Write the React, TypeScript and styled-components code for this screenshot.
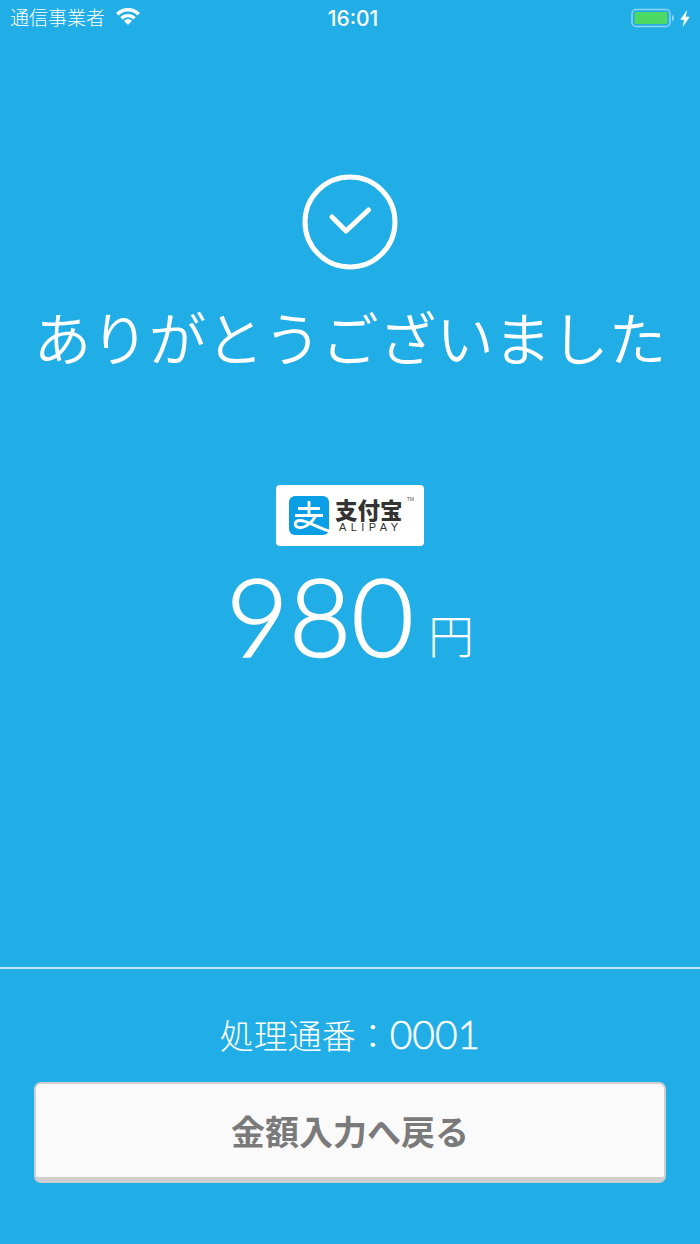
import { createGlobalStyle } from "styled-components";
import styled from "styled-components";

const JP = `"Noto Sans CJK JP", "Noto Sans", sans-serif`;
const LATIN = `Inter, "Noto Sans CJK JP", sans-serif`;
const DIGITS = `Lato, "Noto Sans CJK JP", sans-serif`;

const GlobalStyle = createGlobalStyle`
	html, body {
		margin: 0;
		padding: 0;
		background: #21ade6;
	}
`;

const Page = styled.div`
	width: 700px;
	height: 1244px;
	display: flex;
	flex-direction: column;
	background: #21ade6;
	color: #fff;
	font-family: ${JP};
	overflow: hidden;
`;

const StatusBar = styled.div`
	height: 36px;
	display: grid;
	grid-template-columns: 1fr auto 1fr;
	align-items: center;
	padding: 0 10px;
`;

const StatusLeft = styled.div`
	display: flex;
	align-items: center;
	gap: 11px;
	padding-bottom: 3px;
	font-size: 19px;
	font-weight: 300;
`;

const Clock = styled.div`
	margin-left: 6px;
	font-family: ${LATIN};
	font-size: 21px;
	font-weight: 500;
`;

const StatusRight = styled.div`
	display: flex;
	align-items: center;
	justify-content: flex-end;
	gap: 5px;
`;

const Main = styled.div`
	flex: 1;
	display: flex;
	flex-direction: column;
	align-items: center;
	padding-top: 138px;
`;

const Title = styled.h1`
	margin: 28px 0 0;
	font-size: 57.500px;
	line-height: 76px;
	font-weight: 350;
	white-space: nowrap;
`;

const AlipayBadge = styled.div`
	margin-top: 111px;
	width: 148px;
	height: 61px;
	box-sizing: border-box;
	padding: 11px 0 0 13px;
	display: flex;
	gap: 6px;
	background: #fff;
	border-radius: 4px;
	position: relative;
`;

const AlipayWords = styled.div`
	display: flex;
	flex-direction: column;
	align-items: center;
	color: #333;
`;

const AlipayCn = styled.div`
	margin-top: 1px;
	font-size: 22.500px;
	line-height: 24px;
	font-weight: 900;
	white-space: nowrap;
`;

const AlipayEn = styled.div`
	margin-left: 4px;
	font-family: "Liberation Sans", sans-serif;
	font-size: 11px;
	line-height: 12px;
	letter-spacing: 4.400px;
	white-space: nowrap;
`;

const Tm = styled.span`
	position: absolute;
	top: 11px;
	right: 10px;
	font-family: "Liberation Sans", sans-serif;
	font-size: 5px;
	color: #555;
`;

const Amount = styled.div`
	margin-top: 9px;
	display: flex;
	align-items: center;
	gap: 14px;
`;

const AmountValue = styled.span`
	font-family: ${DIGITS};
	font-size: 108px;
	line-height: 120px;
	font-weight: 300;
	-webkit-text-stroke: 1.500px #fff;
`;

const AmountUnit = styled.span`
	margin-top: 36px;
	font-size: 46px;
	font-weight: 300;
`;

const Footer = styled.div`
	height: 277px;
	box-sizing: border-box;
	border-top: 2px solid rgba(255, 255, 255, 0.72);
	display: flex;
	flex-direction: column;
	align-items: center;
	padding: 0 34px;
`;

const SerialNumber = styled.div`
	margin-top: 39px;
	height: 52px;
	display: flex;
	align-items: center;
	font-size: 34px;
	font-weight: 300;
	white-space: nowrap;
`;

const SerialDigits = styled.span`
	font-family: ${DIGITS};
	font-size: 39px;
	font-weight: 300;
	-webkit-text-stroke: 0.500px #fff;
`;

const BackButton = styled.button`
	margin-top: 22px;
	width: 100%;
	height: 101px;
	box-sizing: border-box;
	border: 2px solid #cfcfcf;
	border-bottom-width: 6px;
	border-radius: 7px;
	background: #fafafa;
	color: #7a7a7a;
	font-family: ${JP};
	font-size: 34px;
	font-weight: 700;
	padding: 0;
`;

const WifiIcon = () => (
	<svg width="24" height="17" viewBox="0 0 24 17">
		<path d="M1.300 6.300a15 15 0 0 1 21.400 0" fill="none" stroke="#fff" strokeWidth="3.400" />
		<path d="M5.500 10.400a9 9 0 0 1 13 0" fill="none" stroke="#fff" strokeWidth="3.400" />
		<path d="M12 17 8 12.700a5.400 5.400 0 0 1 8 0z" fill="#fff" />
	</svg>
);

const BatteryIcon = () => (
	<svg width="44" height="20" viewBox="0 0 44 20">
		<rect x="1" y="1.500" width="38" height="17" rx="4" fill="none" stroke="#8fd6f3" strokeWidth="1.500" />
		<rect x="3.500" y="4" width="33" height="12" rx="1.500" fill="#4cd964" />
		<path d="M41 7c1.600.4 2 1.400 2 3s-.4 2.600-2 3z" fill="#8fd6f3" />
	</svg>
);

const BoltIcon = () => (
	<svg width="10" height="17" viewBox="0 0 10 17">
		<path d="M7 0 0.200 9.700H4L2.800 17 9.800 6.800H5.800z" fill="#fff" />
	</svg>
);

const CheckCircle = () => (
	<svg width="96" height="96" viewBox="0 0 96 96">
		<circle cx="48" cy="48" r="45" fill="none" stroke="#fff" strokeWidth="5" />
		<path d="M30 43 44 57 66.500 36" fill="none" stroke="#fff" strokeWidth="5" strokeLinecap="round" strokeLinejoin="round" />
	</svg>
);

// logo mark, the blue square with the swoosh
const AlipayMark = () => (
	<svg width="40" height="39" viewBox="0 0 40 39">
		<rect width="40" height="39" rx="6" fill="#0a9fe5" />
		<path d="M9 12.500H31M20 5v14M6 19.500H34" fill="none" stroke="#fff" strokeWidth="2.800" />
		<path d="M27 19.500C23 27 15 33 9.500 31.500 4.500 30 5.500 24.500 11 24.500 18 24.500 27 31 40 35" fill="none" stroke="#fff" strokeWidth="2.800" />
	</svg>
);

export default function App() {
	return (
		<Page>
			<GlobalStyle />
			<StatusBar>
				<StatusLeft>
					<span>通信事業者</span>
					<WifiIcon />
				</StatusLeft>
				<Clock>16:01</Clock>
				<StatusRight>
					<BatteryIcon />
					<BoltIcon />
				</StatusRight>
			</StatusBar>
			<Main>
				<CheckCircle />
				<Title>ありがとうございました</Title>
				<AlipayBadge>
					<AlipayMark />
					<AlipayWords>
						<AlipayCn>支付宝</AlipayCn>
						<AlipayEn>ALIPAY</AlipayEn>
					</AlipayWords>
					<Tm>TM</Tm>
				</AlipayBadge>
				<Amount>
					<AmountValue>980</AmountValue>
					<AmountUnit>円</AmountUnit>
				</Amount>
			</Main>
			<Footer>
				<SerialNumber>
					処理通番：<SerialDigits>0001</SerialDigits>
				</SerialNumber>
				<BackButton>金額入力へ戻る</BackButton>
			</Footer>
		</Page>
	);
}
